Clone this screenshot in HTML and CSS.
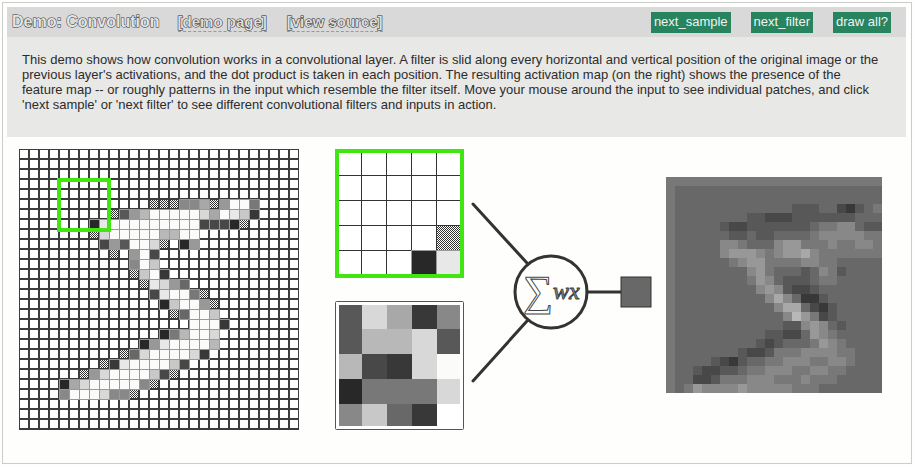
FILE: index.html
```html
<!DOCTYPE html>
<html lang="en">
<head>
<meta charset="utf-8">
<title>Demo: Convolution</title>
<link rel="stylesheet" href="styles.css">
</head>
<body>
<main class="demo">
  <header class="bar">
    <h1 class="title">Demo: Convolution</h1>
    <nav class="links">
      <a class="link" href="#demo">[demo page]</a>
      <a class="link" href="#source">[view source]</a>
    </nav>
    <div class="actions">
      <button class="btn" type="button">next_sample</button>
      <button class="btn" type="button">next_filter</button>
      <button class="btn" type="button">draw all?</button>
    </div>
  </header>
  <p class="intro">This demo shows how convolution works in a convolutional layer. A filter is slid along every horizontal and vertical position of the original image or the previous layer's activations, and the dot product is taken in each position. The resulting activation map (on the right) shows the presence of the feature map -- or roughly patterns in the input which resemble the filter itself. Move your mouse around the input to see individual patches, and click 'next sample' or 'next filter' to see different convolutional filters and inputs in action.</p>
  <section class="stage">
    <svg class="input" id="input" width="280" height="281" viewBox="0 0 280 281" role="img" aria-label="Input image"></svg>
    <div class="patches">
      <svg id="patch" width="129" height="129" viewBox="0 0 129 129" role="img" aria-label="Input patch"></svg>
      <svg id="filter" width="129" height="129" viewBox="0 0 129 129" role="img" aria-label="Filter"></svg>
    </div>
    <svg class="neuron" width="182" height="182" viewBox="0 0 182 182" role="img" aria-label="Weighted sum">
      <g class="wire">
        <path d="M2 3L56 62M2 180L56 120M116 91H150"/>
        <circle cx="80" cy="91" r="36"/>
      </g>
      <rect class="result" x="150" y="76" width="30" height="30"/>
      <text class="sigma" x="52" y="104">∑</text>
      <text class="wx" x="82" y="98">wx</text>
    </svg>
    <svg class="map" id="map" width="216" height="216" viewBox="0 0 216 216" role="img" aria-label="Activation map"></svg>
  </section>
</main>
<script src="demo.js"></script>
</body>
</html>
```
FILE: styles.css
```css
* { box-sizing: border-box; }
body {
  margin: 0;
  padding: 2px 4px 3px 2px;
  background: #fefefd;
  color: #2c2c2c;
  font-family: "Liberation Sans", Arial, sans-serif;
}
.demo {
  border: 1px solid #ccc;
  padding: 4px 5px 33px 4px;
}
.bar {
  display: flex;
  align-items: center;
  height: 30px;
  padding: 0 15px 0 5px;
  background: #d9d9d9;
}
.title {
  margin: 0;
  font-size: 16px;
  line-height: 20px;
  color: #e4e4e4;
  -webkit-text-stroke: 1px #333;
  paint-order: stroke fill;
}
.links { display: flex; gap: 20px; margin-left: 18px; }
.link {
  font-size: 15px;
  font-weight: bold;
  line-height: 18px;
  color: #ddd;
  text-decoration: none;
  border-bottom: 1px dashed #999;
  -webkit-text-stroke: 1px #222;
  paint-order: stroke fill;
}
.actions { display: flex; gap: 20px; margin-left: auto; }
.btn {
  height: 21px;
  padding: 0 3px;
  border: 0;
  background: #28835f;
  color: #f2f2f2;
  font: 13px/20px "Liberation Sans", Arial, sans-serif;
}
.intro {
  margin: 0;
  padding: 15px 24px 25px 15px;
  background: #e8e8e6;
  font-size: 13px;
  line-height: 15px;
}
.stage {
  display: flex;
  align-items: flex-start;
  padding: 12px 24px 0 12px;
}
.stage svg { display: block; flex: none; }
.patches { display: grid; gap: 23px; margin-left: 36px; }
.stage .neuron { margin: 52px 0 0 7px; }
.stage .map { margin: 28px 0 0 auto; }
.wire { fill: none; stroke: #333; stroke-width: 3; stroke-linecap: round; }
.result { fill: #686868; stroke: #333; stroke-width: 1; }
.sigma, .wx {
  fill: #fff;
  stroke: #444;
  stroke-width: 1px;
  font-family: "Liberation Serif", serif;
}
.sigma { font-size: 42px; }
.wx { font-size: 24px; font-style: italic; fill: #999; }
```
FILE: demo.js
```js
// "." is an empty pixel, "x" a half-tone pixel, hex digits are grey levels.
const E = ".".repeat(28);
const at = (start, text) => (".".repeat(start) + text).padEnd(28, ".");
const input = [
  E, E, E, E, E,
  at(13, "xxx88ax9ff7"),
  at(9, "x59bfffffdafec3"),
  at(7, "2efffffffff4442x"),
  at(7, "xdfffffbbff"),
  at(8, "495ffdx.29"),
  at(9, "x.9f4"),
  at(11, "8fc"),
  at(11, "xcf3"),
  at(12, "xed96"),
  at(13, "4eff7x"),
  at(14, "2cff9x"),
  at(15, "x6ffc"),
  at(17, "fff3"),
  at(14, "27bffd"),
  at(12, "29effffb"),
  at(10, "x6dffffd3"),
  at(8, "x3effffc4"),
  at(6, "x9dffffc4x"),
  at(4, "2adfffff8x"),
  at(4, "8fffd88x"),
  E, E, E
];
const patch = [".....", ".....", ".....", "....x", "...2e"];
const filter = ["5da38", "5bbd5", "b43df", "2777d", "8c63."];
const map = [
  "777777777777777777777777",
  "766666666666666666666666",
  "766666666666666666666666",
  "766666666666665556643567",
  "766666666554445555555666",
  "766666544555555567788655",
  "766666655655666678888877",
  "766666887666899777877887",
  "766666899987899a87777777",
  "766666678997777887766666",
  "766666666897666568756666",
  "766666666798655567766666",
  "766666666689854456666666",
  "766666666668a86335666666",
  "7666666666668aa643566666",
  "76666666666668b974566666",
  "766666666666655898656666",
  "766666666665544698766666",
  "766666666654566679876666",
  "766666665445777888877666",
  "766665435667788877887666",
  "766544556778887788776666",
  "766445777888777877766666",
  "767988889888887776666666"
];

const gray = (level) => {
  const v = Math.min(252, parseInt(level, 16) * 16 + 8);
  return level === "f" ? "#fbfbfa" : `rgb(${v},${v},${v})`;
};
const rect = (x, y, w, h, fill, extra = "") =>
  `<rect x="${x}" y="${y}" width="${w}" height="${h}" fill="${fill}" ${extra}/>`;

function cells(rows, size, left, top, gap, checker) {
  let out = "";
  rows.forEach((row, r) => [...row].forEach((c, i) => {
    const x = left + i * size, y = top + r * size, s = size - gap;
    if (c === ".") out += rect(x, y, s, s, "#fff");
    else if (c === "x") out += rect(x, y, s, s, `url(#${checker})`);
    else {
      const inner = gap ? size - 1 : size;
      if (gap) out += rect(x - 1, y - 1, size + 1, size + 1, "#999");
      out += rect(x, y, inner, inner, gray(c));
    }
  }));
  return out;
}
const checkerDef = (id) =>
  `<defs><pattern id="${id}" width="2" height="2" patternUnits="userSpaceOnUse">` +
  rect(0, 0, 2, 2, "#fff") + rect(0, 0, 1, 1, "#333") + rect(1, 1, 1, 1, "#333") +
  `</pattern></defs>`;
const draw = (id, markup) => { document.getElementById(id).innerHTML = markup; };

draw("input", checkerDef("ck1") +
  `<g shape-rendering="crispEdges">` + rect(0, 0, 280, 281, "#3c3c3c") + cells(input, 10, 1, 1, 2, "ck1") +
  `</g>` + rect(40, 31, 50, 50, "none", 'stroke="#41e610" stroke-width="4"'));

draw("patch", checkerDef("ck2") +
  `<g shape-rendering="crispEdges">` + rect(0, 0, 129, 129, "#333") + cells(patch, 25, 2, 2, 1, "ck2") +
  `</g>` + rect(2, 2, 125, 125, "none", 'stroke="#41e610" stroke-width="4"'));

draw("filter",
  `<g shape-rendering="crispEdges">` + rect(0, 0, 129, 129, "#fff") + cells(filter, 25, 2, 3, 0) +
  rect(2, 2, 125, 125, "none", 'stroke="#fff" stroke-width="4"') +
  `</g>` + rect(0.5, 0.5, 128, 128, "none", 'stroke="#555" rx="1"'));

draw("map",
  `<g shape-rendering="crispEdges">` + cells(map, 9, 0, 0, 0) + `</g>`);
```
